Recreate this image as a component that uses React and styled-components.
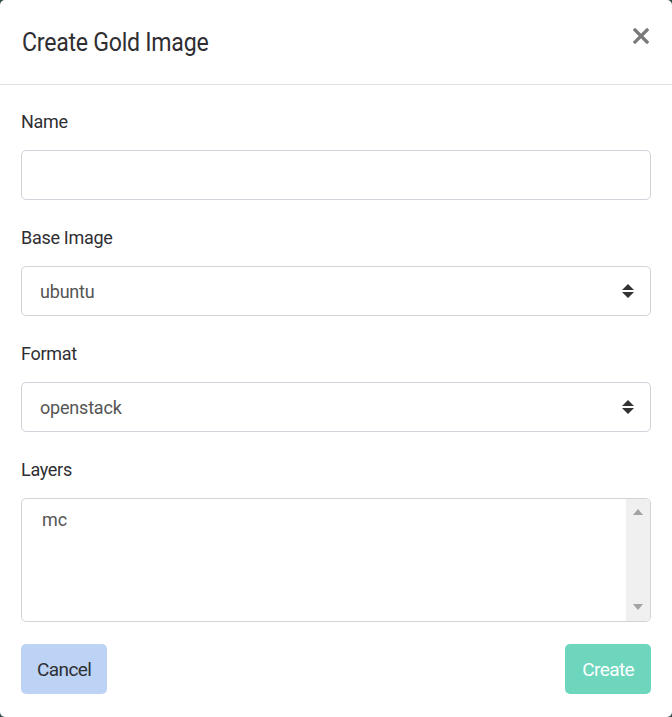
import React from 'react';
import styled, { createGlobalStyle } from 'styled-components';

const GlobalStyle = createGlobalStyle`
  html, body {
    margin: 0;
    padding: 0;
    background: #2f4a47;
  }
  * {
    box-sizing: border-box;
  }
`;

const font = `Roboto, "Noto Sans", sans-serif`;

const Modal = styled.div`
  width: 672px;
  height: 717px;
  background: #fff;
  border-radius: 5px;
  font-family: ${font};
  color: #2f2f33;
  display: flex;
  flex-direction: column;
  overflow: hidden;
`;

const Header = styled.div`
  height: 85px;
  padding: 0 21px 0 22px;
  display: flex;
  align-items: center;
  justify-content: space-between;
  border-bottom: 1px solid #dee2e6;
`;

const Title = styled.h2`
  margin: 0;
  font-size: 26px;
  font-weight: 400;
  letter-spacing: -0.3px;
  transform: scaleX(0.89);
  transform-origin: left center;
  white-space: nowrap;
`;

const CloseButton = styled.button`
  border: none;
  background: none;
  padding: 0;
  margin-top: -12px;
  width: 20px;
  height: 20px;
  cursor: pointer;
  display: flex;
  align-items: center;
  justify-content: center;
`;

const Body = styled.div`
  padding: 25px 21px 23px;
  display: flex;
  flex-direction: column;
  flex: 1;
`;

const Field = styled.div`
  display: flex;
  flex-direction: column;
  gap: 16px;
  margin-bottom: ${p => (p.$last ? 0 : 26)}px;
`;

const Label = styled.label`
  font-size: 18px;
  line-height: 24px;
  letter-spacing: -0.3px;
  color: #2f2f33;
`;

const Input = styled.input`
  height: 50px;
  width: 100%;
  border: 1px solid #ced4da;
  border-radius: 5px;
  padding: 0 18px;
  font-family: ${font};
  font-size: 18px;
  color: #555;
  outline: none;
`;

const SelectBox = styled.div`
  position: relative;
  height: 50px;
`;

const Select = styled.select`
  appearance: none;
  height: 50px;
  width: 100%;
  border: 1px solid #ced4da;
  border-radius: 5px;
  padding: 0 18px;
  background: #fff;
  font-family: ${font};
  font-size: 18px;
  letter-spacing: -0.2px;
  color: #555;
  outline: none;
`;

const Caret = styled.svg`
  position: absolute;
  right: 17px;
  top: 18px;
  pointer-events: none;
`;

const TextAreaBox = styled.div`
  position: relative;
  height: 124px;
`;

const TextArea = styled.textarea`
  display: block;
  height: 124px;
  width: 100%;
  resize: none;
  border: 1px solid #ced4da;
  border-radius: 5px;
  padding: 10px 44px 10px 20px;
  font-family: ${font};
  font-size: 18px;
  color: #555;
  outline: none;
  overflow: hidden;
`;

const ScrollTrack = styled.div`
  position: absolute;
  top: 1px;
  right: 1px;
  bottom: 1px;
  width: 24px;
  background: #f0f0f0;
  border-radius: 0 4px 4px 0;
  display: flex;
  flex-direction: column;
  align-items: center;
  justify-content: space-between;
  padding: 10px 0 11px;
  pointer-events: none;
`;

const ScrollArrow = styled.span`
  width: 0;
  height: 0;
  border-left: 5.5px solid transparent;
  border-right: 5.5px solid transparent;
  ${p => (p.$up ? 'border-bottom' : 'border-top')}: 6px solid #a3a3a3;
`;

const Footer = styled.div`
  display: flex;
  justify-content: space-between;
  margin-top: 22px;
`;

const Button = styled.button`
  height: 50px;
  padding: 0 ${p => p.$pad}px;
  border: none;
  border-radius: 5px;
  background: ${p => p.$bg};
  color: ${p => p.$fg};
  font-family: ${font};
  font-size: 19px;
  letter-spacing: -0.6px;
  cursor: pointer;
`;

const SelectField = ({ label, value }) => (
  <Field>
    <Label>{label}</Label>
    <SelectBox>
      <Select defaultValue={value}>
        <option value={value}>{value}</option>
      </Select>
      <Caret width="12" height="14" viewBox="0 0 12 14">
        <path d="M6 0 L12 6 L0 6 Z M0 8 L12 8 L6 14 Z" fill="#333" />
      </Caret>
    </SelectBox>
  </Field>
);

export default function App() {
  return (
    <>
      <GlobalStyle />
      <Modal>
        <Header>
          <Title>Create Gold Image</Title>
          <CloseButton aria-label="Close">
            <svg width="16" height="16" viewBox="0 0 16 16">
              <path d="M2 2 L14 14 M14 2 L2 14" stroke="#7a7a7a" strokeWidth="3.2" strokeLinecap="square" />
            </svg>
          </CloseButton>
        </Header>
        <Body>
          <Field>
            <Label>Name</Label>
            <Input type="text" />
          </Field>
          <SelectField label="Base Image" value="ubuntu" />
          <SelectField label="Format" value="openstack" />
          <Field $last>
            <Label>Layers</Label>
            <TextAreaBox>
              <TextArea defaultValue="mc" />
              <ScrollTrack>
                <ScrollArrow $up />
                <ScrollArrow />
              </ScrollTrack>
            </TextAreaBox>
          </Field>
          <Footer>
            <Button $bg="#bdd3f6" $fg="#2f2f33" $pad={16}>Cancel</Button>
            <Button $bg="#6dd6bd" $fg="#fff" $pad={17}>Create</Button>
          </Footer>
        </Body>
      </Modal>
    </>
  );
}
